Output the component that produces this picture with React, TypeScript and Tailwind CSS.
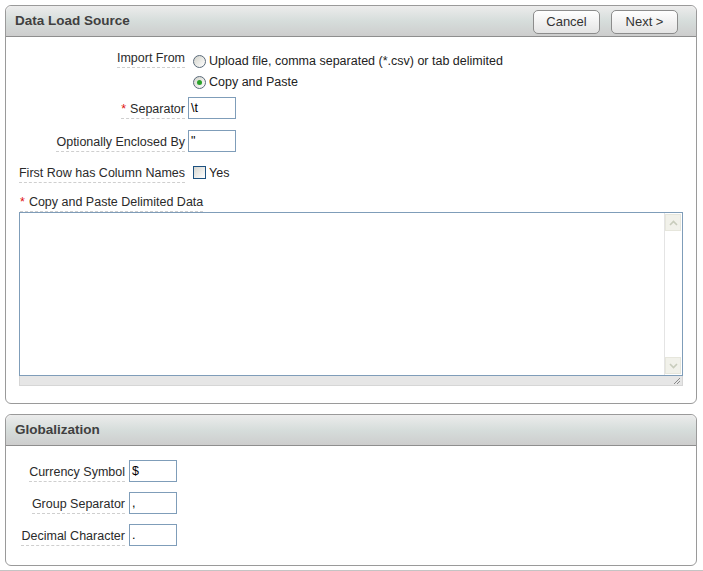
const font = { fontFamily: '"Liberation Sans", Arial, sans-serif' };

function Label({ children, required, className = "" }: { children: React.ReactNode; required?: boolean; className?: string }) {
  return (
    <span className={`block border-b border-dashed border-[#cfcfcf] leading-[14px] pb-[2px] text-[12.5px] text-[#2a2a2a] whitespace-nowrap ${className}`}>
      {required && <span className="text-[#e01010] mr-[4px]">*</span>}
      {children}
    </span>
  );
}

function Field({ value }: { value: string }) {
  return (
    <div className="w-[48px] h-[22px] border border-[#7f9db9] bg-white px-[2px] text-[12.5px] leading-[20px] text-black">
      {value}
    </div>
  );
}

function Radio({ checked }: { checked?: boolean }) {
  return (
    <span className="w-[13px] h-[13px] rounded-full border border-[#5a6a7a] bg-gradient-to-br from-[#d4d4cc] to-white flex items-center justify-center">
      {checked && <span className="w-[5px] h-[5px] rounded-full bg-[#2aa22a]" />}
    </span>
  );
}

function PanelHeader({ title, children }: { title: string; children?: React.ReactNode }) {
  return (
    <div className="h-[31px] flex items-center justify-between pl-[9px] pr-[18px] rounded-t-[6px] border-b border-[#8e8e8e] bg-gradient-to-b from-[#ececec] via-[#d6dddb] to-[#cdcdcd]">
      <span className="text-[13.5px] font-bold text-[#404040]">{title}</span>
      {children}
    </div>
  );
}

function Button({ children }: { children: React.ReactNode }) {
  return (
    <div className="w-[67px] h-[24px] rounded-[5px] border border-[#8c8c8c] bg-gradient-to-b from-white to-[#e4e4e4] flex items-center justify-center text-[13px] text-[#333]">
      {children}
    </div>
  );
}

export default function App() {
  return (
    <div className="bg-white w-[703px] h-[571px] overflow-hidden pt-[5px]" style={font}>
      {/* Data Load Source */}
      <div className="ml-[5px] w-[692px] border border-[#9a9a9a] rounded-[6px] bg-white">
        <PanelHeader title="Data Load Source">
          <div className="flex gap-[11px] pt-[1px]">
            <Button>Cancel</Button>
            <Button>Next &gt;</Button>
          </div>
        </PanelHeader>
        <div className="pt-[14px] pl-[13px] pr-[14px] pb-[17px]">
          <div className="flex">
            <div className="w-[166px] flex justify-end">
              <div><Label>Import From</Label></div>
            </div>
            <div className="ml-[8px] flex flex-col">
              <div className="h-[21px] flex items-center gap-[3px] text-[12.5px] text-[#222]">
                <Radio />
                <span>Upload file, comma separated (*.csv) or tab delimited</span>
              </div>
              <div className="h-[21px] flex items-center gap-[3px] text-[12.5px] text-[#222]">
                <Radio checked />
                <span>Copy and Paste</span>
              </div>
            </div>
          </div>

          <div className="flex items-center mt-[4px] h-[22px]">
            <div className="w-[166px] flex justify-end">
              <Label required className="mt-[5px]">Separator</Label>
            </div>
            <div className="ml-[3px]"><Field value="\t" /></div>
          </div>

          <div className="flex items-center mt-[11px] h-[22px]">
            <div className="w-[166px] flex justify-end">
              <Label className="mt-[5px]">Optionally Enclosed By</Label>
            </div>
            <div className="ml-[3px]"><Field value={'"'} /></div>
          </div>

          <div className="flex items-center mt-[9px] h-[22px]">
            <div className="w-[166px] flex justify-end">
              <Label className="mt-[5px]">First Row has Column Names</Label>
            </div>
            <div className="ml-[8px] flex items-center gap-[3px] text-[12.5px] text-[#222]">
              <span className="w-[13px] h-[13px] border border-[#1c5180] bg-gradient-to-br from-[#d6d6d0] to-white" />
              <span className="leading-[14px] mt-[1px]">Yes</span>
            </div>
          </div>

          <div className="mt-[12px] pl-[1px] flex">
            <Label required>Copy and Paste Delimited Data</Label>
          </div>

          <div className="w-[664px]">
            <div className="h-[164px] border border-[#7f9db9] flex bg-white">
              <div className="flex-1" />
              <div className="w-[18px] border-l border-[#e4e4e4] flex flex-col justify-between py-[1px] pr-[1px]">
                <div className="h-[17px] bg-[#f1f1ea] border border-[#e6e6dc] flex items-center justify-center">
                  <svg width="9" height="6" viewBox="0 0 9 6"><path d="M1 5 L4.5 1.5 L8 5" fill="none" stroke="#c8ccbc" strokeWidth="1.6" /></svg>
                </div>
                <div className="h-[17px] bg-[#f1f1ea] border border-[#e6e6dc] flex items-center justify-center">
                  <svg width="9" height="6" viewBox="0 0 9 6"><path d="M1 1 L4.5 4.5 L8 1" fill="none" stroke="#c8ccbc" strokeWidth="1.6" /></svg>
                </div>
              </div>
            </div>
            <div className="h-[10px] bg-[#e6e6e6] border border-t-0 border-[#d6d6d6] flex justify-end items-end pr-[1px]">
              <svg width="8" height="8" viewBox="0 0 8 8">
                <path d="M7 1 L1 7 M7 4 L4 7" stroke="#8a8a8a" strokeWidth="1" />
              </svg>
            </div>
          </div>
        </div>
      </div>

      {/* Globalization */}
      <div className="ml-[5px] mt-[10px] w-[692px] border border-[#9a9a9a] rounded-[6px] bg-white">
        <PanelHeader title="Globalization" />
        <div className="pt-[14px] pl-[13px] pb-[19px] flex flex-col gap-[10px]">
          {[
            ["Currency Symbol", "$"],
            ["Group Separator", ","],
            ["Decimal Character", "."],
          ].map(([label, value]) => (
            <div key={label} className="flex items-center h-[22px]">
              <div className="w-[106px] flex justify-end">
                <Label className="mt-[5px]">{label}</Label>
              </div>
              <div className="ml-[4px]"><Field value={value} /></div>
            </div>
          ))}
        </div>
      </div>

      <div className="mt-[4px] h-[2px] bg-[#c4c4c4]" />
    </div>
  );
}
